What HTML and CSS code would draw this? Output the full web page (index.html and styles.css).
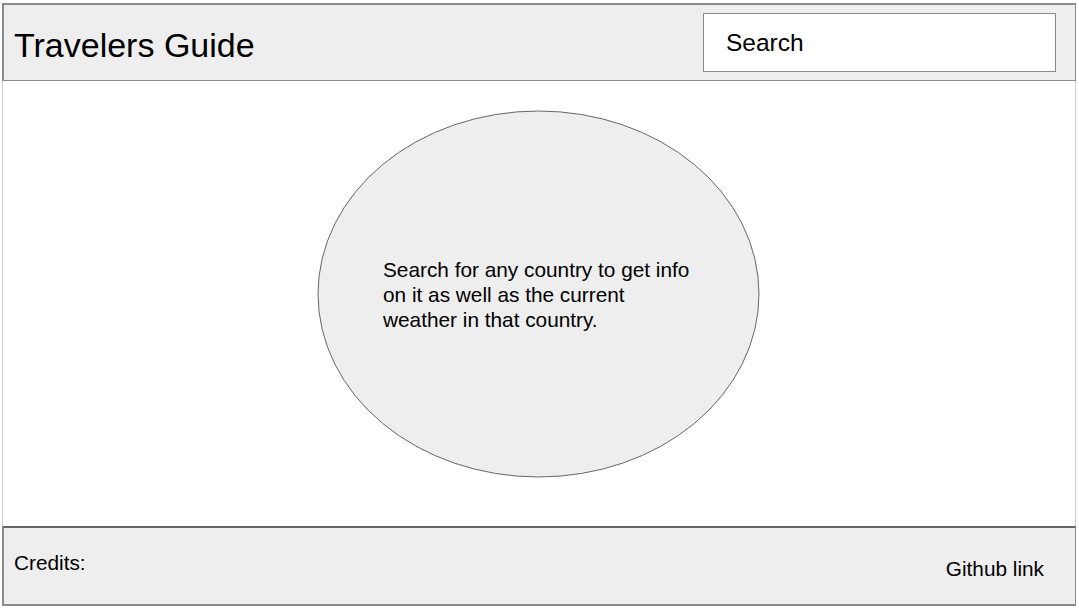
FILE: index.html
```html
<!DOCTYPE html>
<html>
<head>
<meta charset="utf-8">
<link rel="stylesheet" href="styles.css">
</head>
<body>
<div class="page">
  <header class="header">
    <h1 class="title">Travelers Guide</h1>
    <div class="search">Search</div>
  </header>
  <main class="main">
    <div class="bubble">
      <svg class="ellipse" width="443" height="368" viewBox="0 0 443 368">
        <ellipse cx="221.5" cy="184" rx="220.5" ry="183" fill="#eeeeee" stroke="#666666" stroke-width="1"/>
      </svg>
      <p class="intro">Search for any country to get info on it as well as the current weather in that country.</p>
    </div>
  </main>
  <footer class="footer">
    <span class="credits">Credits:</span>
    <span class="github">Github link</span>
  </footer>
</div>
</body>
</html>
```
FILE: styles.css
```css
html, body {
  margin: 0;
  padding: 0;
  background: #ffffff;
}
body {
  font-family: "Liberation Sans", Arial, sans-serif;
  color: #000;
}
.page {
  padding: 3px 3px 0 2px;
  display: flex;
  flex-direction: column;
}
.header {
  height: 78px;
  box-sizing: border-box;
  background: #eeeeee;
  border: 1px solid #8a8a8a;
  border-left-width: 2px;
  border-top-width: 2px;
  display: flex;
  align-items: center;
  justify-content: space-between;
  padding: 0 19px 0 10px;
}
.title {
  margin: 0;
  font-weight: normal;
  font-size: 34px;
  line-height: 1;
  margin-top: 4px;
}
.search {
  width: 353px;
  height: 59px;
  box-sizing: border-box;
  background: #ffffff;
  border: 1px solid #8a8a8a;
  font-size: 24.5px;
  padding-left: 22px;
  display: flex;
  align-items: center;
  margin-top: 0;
}
.main {
  height: 445px;
  box-sizing: border-box;
  border-left: 1px solid #cccccc;
  border-right: 1px solid #cccccc;
  display: flex;
  justify-content: center;
  padding-top: 29px;
  padding-right: 1px;
}
.bubble {
  position: relative;
  width: 443px;
  height: 368px;
}
.ellipse {
  display: block;
}
.intro {
  position: absolute;
  left: 66px;
  top: 147px;
  width: 316px;
  margin: 0;
  font-size: 20.8px;
  line-height: 25px;
}
.footer {
  height: 80px;
  box-sizing: border-box;
  background: #eeeeee;
  border: 1px solid #8a8a8a;
  border-top: 2px solid #666666;
  border-left-width: 2px;
  border-bottom-width: 2px;
  display: flex;
  justify-content: space-between;
  padding: 0 31px 0 10px;
  font-size: 20.8px;
}
.credits {
  margin-top: 23px;
}
.github {
  margin-top: 29px;
}
```
